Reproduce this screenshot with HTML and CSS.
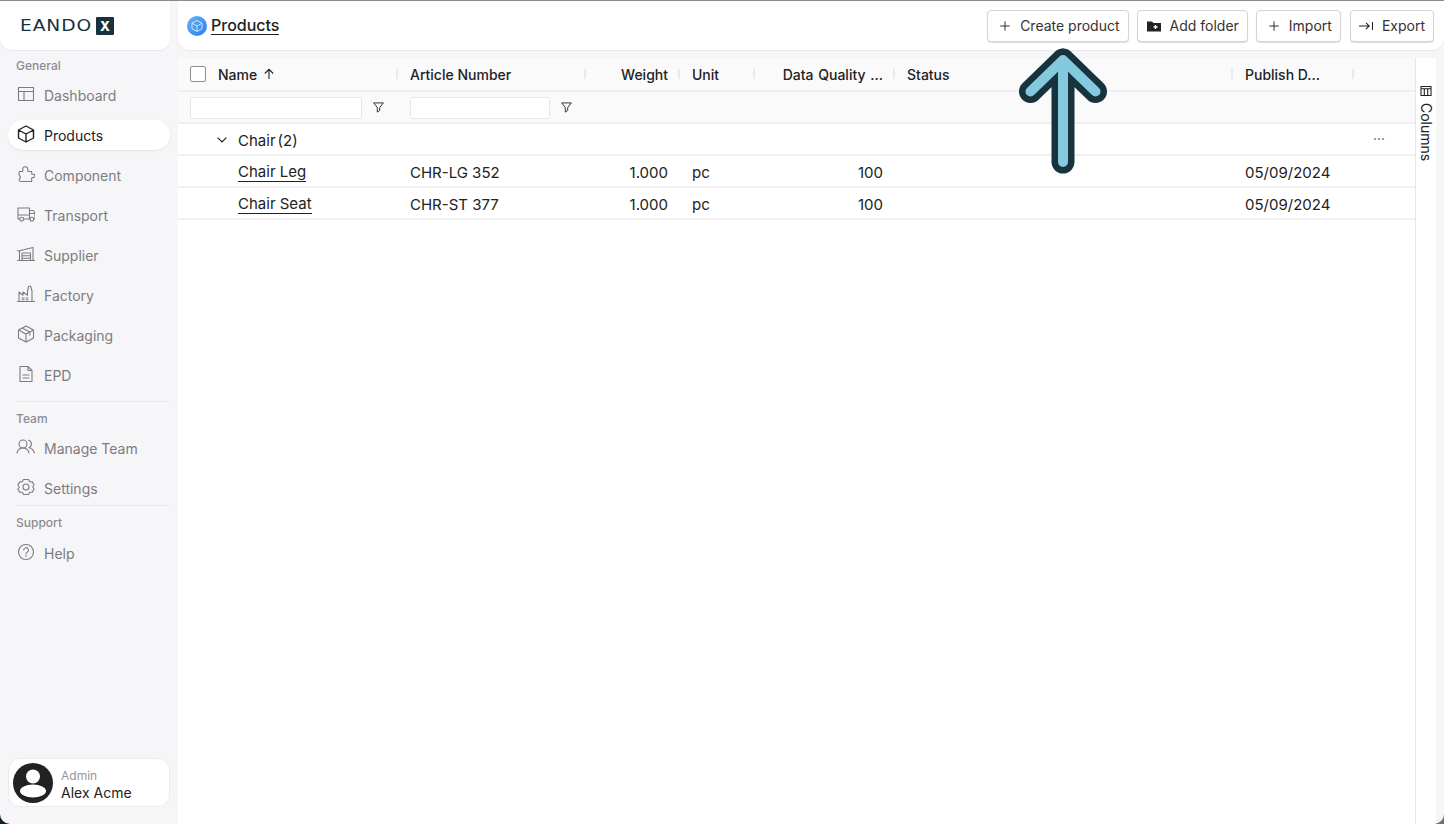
FILE: index.html
```html
<!DOCTYPE html>
<html lang="en">
<head>
<meta charset="utf-8">
<title>Products</title>
<link rel="stylesheet" href="styles.css">
</head>
<body>
<div class="app">
  <aside class="sidebar">
    <div class="logo-card">
      <span class="logo-word">EANDO</span><span class="logo-x">X</span>
    </div>
    <div class="nav-label first">General</div>
    <a class="nav-item"><svg class="ico" viewBox="0 0 18 18"><path d="M1.500 2.500h15v13h-15zM1.500 6.500h15M7 6.500v9"/></svg>Dashboard</a>
    <a class="nav-item active"><svg class="ico" viewBox="0 0 18 18"><path d="M9 1l7.500 4v8L9 17l-7.500-4V5zM1.500 5L9 9l7.500-4M9 9v8"/></svg>Products</a>
    <a class="nav-item"><svg class="ico" viewBox="0 0 18 18"><path d="M2.500 6.500h2.700c.5 0 .8-.4.7-.9C5.300 3.500 6.500 1.800 8.300 1.800s3 1.700 2.400 3.800c-.1.500.2.900.7.900h3.300v2.200c0 .4.400.7.800.6 1.300-.4 2.200.4 2.200 1.600s-.9 2-2.200 1.600c-.4-.1-.8.200-.8.600v3.400H4c-1.800 0-2.500-2-1.200-3.100.9-.8.900-1.500.1-2.300-1.400-1.400-1.400-2.200-.4-4.600z"/></svg>Component</a>
    <a class="nav-item"><svg class="ico" viewBox="0 0 18 18"><path d="M2.800 14H1V3h11.500v11H6.700M12.500 5.500h3.500l2 2.500v6h-1.200M12.500 14h.5M1 10h11.500M12.500 8.500H18"/><circle cx="4.700" cy="14.200" r="1.900"/><circle cx="14.800" cy="14.200" r="1.900"/></svg>Transport</a>
    <a class="nav-item"><svg class="ico" viewBox="0 0 18 18"><path d="M.5 15.500h17M2.500 15.500V5.800L16 2.500v13M5 15.500V8h8.500v7.500M5 10.700h8.500M5 13.200h8.500M.5 5.800h2"/></svg>Supplier</a>
    <a class="nav-item"><svg class="ico" viewBox="0 0 18 18"><path d="M.5 16.500h17M2 16.500V7l4 3.200V7l4.500 3.200V6l1.200-4.800h2L15 6v10.500M5 13h2M5 14.700h2M9 13h2M9 14.700h2"/></svg>Factory</a>
    <a class="nav-item"><svg class="ico" viewBox="0 0 18 18"><path d="M9 1l7.500 4v8L9 17l-7.500-4V5zM1.500 5L9 9l7.500-4M9 9v8M5 3l7.800 4.100v3"/></svg>Packaging</a>
    <a class="nav-item"><svg class="ico" viewBox="0 0 18 18"><path d="M3 1.500h8l4 4v11H3zM11 1.500v4h4M6 10h6M6 13h6"/></svg>EPD</a>
    <div class="nav-divider"></div>
    <div class="nav-label team-label">Team</div>
    <a class="nav-item team"><svg class="ico" viewBox="0 0 20 18"><circle cx="7" cy="6" r="4"/><path d="M1 15c.8-3.200 3-5 6-5s5.200 1.800 6 5M12.500 2.200a4 4 0 0 1 .5 7.500c2.500.5 4.500 2.400 5.500 5"/></svg>Manage Team</a>
    <a class="nav-item"><svg class="ico" viewBox="0 0 18 18"><path d="M6.500 1.500h5l1.200 2.300 2.600.1 1.800 3.100-1.400 2 1.400 2-1.800 3.100-2.600.1-1.200 2.300h-5l-1.200-2.300-2.600-.1-1.800-3.100 1.400-2-1.400-2 1.800-3.100 2.600-.1z"/><circle cx="9" cy="9" r="3"/></svg>Settings</a>
    <div class="nav-divider tight"></div>
    <div class="nav-label">Support</div>
    <a class="nav-item"><svg class="ico" viewBox="0 0 18 18"><circle cx="9" cy="9" r="7.500"/><path d="M6.700 7a2.400 2.400 0 1 1 3.500 2.200c-.8.400-1.200.8-1.200 1.800M9 12.500v1"/></svg>Help</a>
    <div class="user-card">
      <svg class="avatar" viewBox="0 0 40 40"><circle cx="20" cy="20" r="20" fill="#222"/><circle cx="20" cy="13.500" r="7" fill="#fff"/><ellipse cx="20" cy="28" rx="13" ry="6.500" fill="#fff"/></svg>
      <div class="user-text">
        <span class="user-role">Admin</span>
        <span class="user-name">Alex Acme</span>
      </div>
    </div>
  </aside>
  <main class="main">
    <header class="topbar">
      <svg class="page-ico" viewBox="0 0 20 20"><defs><linearGradient id="pg" x1="0" y1="0" x2="1" y2="1"><stop offset="0" stop-color="#62b4f9"/><stop offset="1" stop-color="#2c7bee"/></linearGradient></defs><circle cx="10" cy="10" r="10" fill="url(#pg)"/><path d="M10 4.500l5 2.700v5.600l-5 2.700-5-2.700V7.200zM5 7.200L10 10l5-2.800M10 10v5.500" fill="none" stroke="#cfe5fb" stroke-width="1"/></svg>
      <a class="page-title">Products</a>
      <div class="actions">
        <button class="btn"><svg class="btn-ico" viewBox="0 0 14 14"><path d="M7 1.500v11M1.500 7h11"/></svg>Create product</button>
        <button class="btn folder"><svg class="btn-ico solid" viewBox="0 0 14 14"><path d="M0 2.500h5l1.500 1.500H14v8.500H0z"/><path class="plus" d="M8.500 6v4M6.500 8h4"/></svg>Add folder</button>
        <button class="btn"><svg class="btn-ico" viewBox="0 0 14 14"><path d="M7 1.500v11M1.500 7h11"/></svg>Import</button>
        <button class="btn export"><svg class="btn-ico" viewBox="0 0 14 14"><path d="M0 7h10M7 3.800L10.200 7 7 10.200M13.500 3v8"/></svg>Export</button>
      </div>
    </header>
    <div class="content">
      <section class="grid">
        <div class="row head">
          <div class="cell c-name"><span class="checkbox"></span><span>Name</span><svg class="sort" viewBox="0 0 12 12"><path d="M6 11V1.500M1.800 5.500L6 1.300l4.200 4.200"/></svg></div>
          <div class="cell c-art">Article Number</div>
          <div class="cell c-wgt num">Weight</div>
          <div class="cell c-unit">Unit</div>
          <div class="cell c-dq num">Data Quality ...</div>
          <div class="cell c-stat">Status</div>
          <div class="cell c-pub">Publish D...</div>
          <div class="cell c-end"></div>
        </div>
        <div class="row filters">
          <div class="cell c-name"><input class="filter-input" type="text"><svg class="funnel" viewBox="0 0 12 12"><path d="M.7 1h10.600L7.300 6v3.200L4.700 11V6z"/></svg></div>
          <div class="cell c-art"><input class="filter-input" type="text"><svg class="funnel" viewBox="0 0 12 12"><path d="M.7 1h10.600L7.300 6v3.200L4.700 11V6z"/></svg></div>
        </div>
        <div class="row body">
          <div class="cell c-name group"><svg class="chev" viewBox="0 0 10 6"><path d="M.7.700L5 5 9.300.700"/></svg>Chair<span class="count">(2)</span></div>
          <div class="cell dots">···</div>
        </div>
        <div class="row body">
          <div class="cell c-name leaf"><a class="link">Chair Leg</a></div>
          <div class="cell c-art">CHR-LG 352</div>
          <div class="cell c-wgt num">1.000</div>
          <div class="cell c-unit">pc</div>
          <div class="cell c-dq num">100</div>
          <div class="cell c-stat"></div>
          <div class="cell c-pub">05/09/2024</div>
        </div>
        <div class="row body">
          <div class="cell c-name leaf"><a class="link">Chair Seat</a></div>
          <div class="cell c-art">CHR-ST 377</div>
          <div class="cell c-wgt num">1.000</div>
          <div class="cell c-unit">pc</div>
          <div class="cell c-dq num">100</div>
          <div class="cell c-stat"></div>
          <div class="cell c-pub">05/09/2024</div>
        </div>
      </section>
      <aside class="side-tab">
        <div class="tab-label"><svg class="tab-ico" viewBox="0 0 12 12"><path d="M1 1.500h10v9H1zM1 3.800h10M4.300 3.800v6.700M7.700 3.800v6.700"/></svg>Columns</div>
      </aside>
    </div>
  </main>
</div>
<svg class="callout" viewBox="0 0 100 140">
  <path class="callout-o" d="M44 126V24M11.500 55.500L44 24 76.500 55.500"/>
  <path class="callout-i" d="M44 126V24M11.500 55.500L44 24 76.500 55.500"/>
</svg>
</body>
</html>
```
FILE: styles.css
```css
* { box-sizing: border-box; }
html, body { margin: 0; height: 100%; }
body {
  font-family: Inter, "Liberation Sans", sans-serif;
  font-size: 14px;
  color: #222;
  background: linear-gradient(to right, #10222c 50%, #6f6f72 50%);
  overflow: hidden;
}
.app {
  display: flex;
  height: 824px;
  border-top: 1px solid #8a8a8a;
  border-radius: 0 0 10px 10px;
  background: #f6f6f8;
  overflow: hidden;
}
.sidebar {
  width: 178px;
  flex: none;
  display: flex;
  flex-direction: column;
  padding-right: 8px;
}
.logo-card {
  height: 49px;
  background: #fff;
  border-radius: 0 0 12px 12px;
  box-shadow: 0 1px 1px #e8e8ec;
  display: flex;
  align-items: center;
  padding-left: 20px;
  flex: none;
}
.logo-word {
  display: inline-block;
  width: 76px;
  font-family: "DejaVu Sans", sans-serif;
  font-size: 16.500px;
  letter-spacing: .8px;
  color: #17323c;
  font-weight: 400;
  transform: scaleX(1.130);
  transform-origin: left center;
}
.logo-x {
  width: 18px;
  height: 18px;
  background: #17323c;
  color: #fff;
  font-size: 13px;
  font-weight: 800;
  display: flex;
  align-items: center;
  justify-content: center;
  border-radius: 1px;
}
.nav-label {
  font-size: 12px;
  line-height: 16px;
  font-weight: 500;
  color: #8c8c90;
  padding-left: 16px;
  margin: 1px 0 7px;
}
.nav-label.first { margin: 8px 0 6px; }
.nav-label.team-label { margin: 1px 0 6px; }
.nav-item {
  height: 30px;
  margin: 0 0 10px 8px;
  padding-left: 9px;
  display: flex;
  align-items: center;
  gap: 9px;
  color: #7c7c80;
  border-radius: 15px;
  flex: none;
}
.nav-item.active {
  background: #fff;
  color: #222;
  box-shadow: 0 1px 2px #e2e2e6;
}
.nav-item.active .ico { stroke-width: 1.400; }
.ico {
  width: 18px;
  height: 18px;
  fill: none;
  stroke: currentColor;
  stroke-width: 1.100;
  stroke-linejoin: round;
  stroke-linecap: round;
  flex: none;
  margin-top: -2px;
}
.team .ico { width: 20px; margin-left: -1px; margin-right: -1px; }
.nav-divider {
  height: 1px;
  background: #e8e8ec;
  margin: 1px 0 8px 16px;
  flex: none;
}
.nav-divider.tight { margin: -8px 0 8px 16px; }
.user-card {
  margin: auto 0 17px 8px;
  width: 162px;
  height: 49px;
  flex: none;
  background: #fff;
  border: 1px solid #ececef;
  border-radius: 12px;
  display: flex;
  align-items: center;
  padding-left: 4px;
  gap: 8px;
}
.avatar { width: 40px; height: 40px; }
.user-text { display: flex; flex-direction: column; padding-top: 4px; }
.user-role { font-size: 12px; line-height: 16px; color: #96969a; }
.user-name { font-size: 14px; line-height: 18px; color: #222; }
.main {
  flex: 1;
  min-width: 0;
  display: flex;
  flex-direction: column;
}
.topbar {
  height: 49px;
  flex: none;
  background: #fff;
  border-radius: 0 0 12px 12px;
  box-shadow: 0 1px 1px #e8e8ec;
  display: flex;
  align-items: center;
  padding: 0 10px 0 9px;
}
.page-ico { width: 20px; height: 20px; margin-right: 4px; }
.page-title {
  font-size: 16px;
  font-weight: 500;
  color: #222;
  border-bottom: 1px solid #222;
  line-height: 17px;
  margin-top: 1px;
}
.actions { margin-left: auto; display: flex; gap: 8px; }
.btn {
  height: 32px;
  display: flex;
  align-items: center;
  gap: 9px;
  padding: 0 8px 0 11px;
  background: #fff;
  border: 1px solid #d4d4d8;
  border-radius: 4px;
  box-shadow: 0 1px 1px #dedee2;
  font: 400 14px Inter, "Liberation Sans", sans-serif;
  color: #333;
}
.btn.folder { padding-left: 9px; }
.btn.export { padding-left: 8px; margin-left: 1px; }
.btn-ico {
  width: 12px;
  height: 12px;
  fill: none;
  stroke: #222;
  stroke-width: 1.100;
  flex: none;
}
.btn-ico.solid { width: 14px; height: 14px; fill: #222; stroke: none; }
.btn-ico .plus { stroke: #fff; stroke-width: 1.300; fill: none; }
.export .btn-ico { width: 14px; height: 14px; }
.content {
  flex: 1;
  display: flex;
  margin: 8px 8px 0 0;
  min-height: 0;
}
.grid {
  flex: 1;
  min-width: 0;
  background: #fff;
}
.row {
  display: flex;
  height: 32px;
  border-bottom: 2px solid #f0f0f4;
  position: relative;
}
.head { height: 34px; background: #fafafb; font-weight: 500; }
.filters { height: 32px; background: #fafafb; }
.body { font-size: 15px; }
.cell {
  display: flex;
  align-items: center;
  padding: 0 12px;
  white-space: nowrap;
  flex: none;
  position: relative;
}
.body .cell { padding-top: 2px; }
.num { justify-content: flex-end; }
.c-name { width: 220px; }
.c-art { width: 188px; }
.c-wgt { width: 94px; }
.c-unit { width: 75px; }
.c-dq { width: 140px; }
.head .c-dq { word-spacing: 1px; }
.c-stat { width: 338px; }
.c-pub { width: 121px; }
.c-end { width: 61px; }
.head .cell:not(.c-end)::after {
  content: "";
  position: absolute;
  right: 0;
  top: 11px;
  width: 2px;
  height: 10px;
  background: #e6e9f2;
}
.checkbox {
  width: 16px;
  height: 16px;
  border: 1.500px solid #8e8e92;
  border-radius: 2px;
  background: #fff;
  margin-right: 12px;
  flex: none;
}
.sort {
  width: 12px;
  height: 12px;
  fill: none;
  stroke: #222;
  stroke-width: 1.100;
  margin-left: 6px;
}
.filter-input {
  height: 22px;
  flex: none;
  border: 1px solid #e2e6ee;
  border-radius: 3px;
  background: #fff;
  padding: 0;
  outline: none;
  margin-top: 1px;
}
.c-name .filter-input { width: 172px; }
.c-art .filter-input { width: 140px; }
.funnel {
  width: 11px;
  height: 11px;
  fill: none;
  stroke: #222;
  stroke-width: 1;
  margin-left: 11px;
  flex: none;
}
.chev {
  width: 10px;
  height: 6px;
  fill: none;
  stroke: #222;
  stroke-width: 1.200;
  position: absolute;
  left: 39px;
}
.group { padding-left: 60px; }
.count { margin-left: 2px; }
.leaf { padding-left: 60px; }
.link { border-bottom: 1px solid #222; line-height: 18px; }
.body .dots {
  position: absolute;
  right: 30px;
  top: -1px;
  height: 30px;
  padding: 0;
  color: #8c8c90;
  font-weight: 700;
  font-size: 12px;
}
.side-tab {
  width: 21px;
  flex: none;
  background: #fff;
  border-left: 1px solid #e6e6ea;
}
.tab-label {
  writing-mode: vertical-rl;
  display: flex;
  align-items: center;
  gap: 6px;
  font-size: 14px;
  color: #222;
  padding-top: 27px;
  width: 20px;
}
.tab-ico {
  width: 12px;
  height: 12px;
  fill: none;
  stroke: #222;
  stroke-width: 1.100;
  flex: none;
}
.callout {
  position: absolute;
  left: 1019px;
  top: 36px;
  width: 100px;
  height: 140px;
  pointer-events: none;
}
.callout path { fill: none; stroke-linecap: round; stroke-linejoin: round; }
.callout-o { stroke: #17333d; stroke-width: 23; }
.callout-i { stroke: #85c9de; stroke-width: 10; }
```
